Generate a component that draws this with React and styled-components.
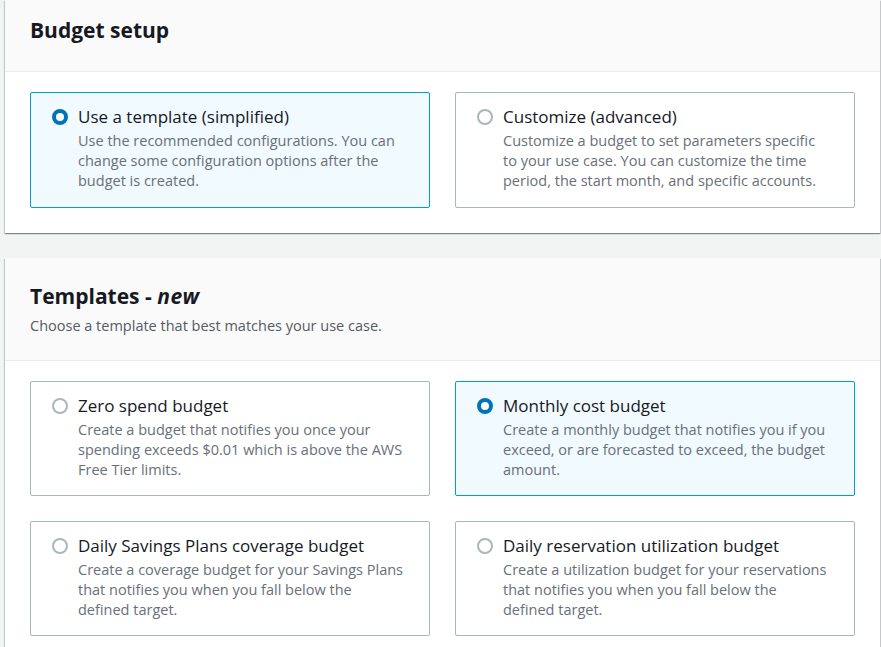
import React, { useState } from 'react';
import styled, { createGlobalStyle } from 'styled-components';

const GlobalStyle = createGlobalStyle`
  html, body {
    margin: 0;
    padding: 0;
    background: #f2f3f3;
  }
  body {
    font-family: 'Open Sans', 'Noto Sans', Arial, sans-serif;
    color: #16191f;
    -webkit-font-smoothing: antialiased;
  }
`;

const Page = styled.div`
  display: flex;
  flex-direction: column;
  gap: 25px;
  padding: 0 1px 0 5px;
  width: 875px;
`;

const Panel = styled.section`
  background: #ffffff;
  box-shadow: 0 1px 1px 0 rgba(0, 28, 36, 0.3), 1px 1px 1px 0 rgba(0, 28, 36, 0.15),
    -1px 1px 1px 0 rgba(0, 28, 36, 0.15);
`;

const PanelHeader = styled.header`
  background: #fafafa;
  border-bottom: 1px solid #eaeded;
  padding: ${(p) => p.$pad};
`;

const Title = styled.h2`
  margin: 0;
  font-size: 21px;
  line-height: 22px;
  font-weight: 700;
  color: #16191f;

  em {
    font-style: italic;
    letter-spacing: 0.5px;
  }
`;

const Subtitle = styled.p`
  margin: 9px 0 0;
  font-size: 14.5px;
  line-height: 20px;
  color: #545b64;
`;

const PanelBody = styled.div`
  display: grid;
  grid-template-columns: 400px 400px;
  column-gap: 25px;
  row-gap: 25px;
  padding: 20px 24px ${(p) => p.$bottom} 25px;
`;

const Tile = styled.label`
  display: flex;
  align-items: flex-start;
  gap: 10px;
  box-sizing: border-box;
  min-height: ${(p) => p.$height};
  padding: 13px 23px 14px 21px;
  border: 1px solid ${(p) => (p.$checked ? '#00a1c9' : '#aab7b8')};
  border-radius: 2px;
  background: ${(p) => (p.$checked ? '#f1faff' : '#ffffff')};
  cursor: pointer;
`;

const Radio = styled.span`
  flex: none;
  box-sizing: border-box;
  width: 16px;
  height: 16px;
  margin-top: 3px;
  border-radius: 50%;
  border: ${(p) => (p.$checked ? '4.5px solid #0073bb' : '2px solid #aab7b8')};
  background: #ffffff;
`;

const TileText = styled.div`
  display: flex;
  flex-direction: column;
  gap: 3px;
`;

const TileTitle = styled.span`
  font-size: 17px;
  line-height: 22px;
  color: #16191f;
`;

const TileDesc = styled.span`
  font-size: 14.5px;
  line-height: 20px;
  color: #687078;
`;

function Option({ checked, title, desc, height, onSelect }) {
  return (
    <Tile $checked={checked} $height={height} onClick={onSelect}>
      <Radio $checked={checked} />
      <TileText>
        <TileTitle>{title}</TileTitle>
        <TileDesc>{desc}</TileDesc>
      </TileText>
    </Tile>
  );
}

const setupOptions = [
  {
    id: 'template',
    title: 'Use a template (simplified)',
    desc: 'Use the recommended configurations. You can change some configuration options after the budget is created.',
  },
  {
    id: 'custom',
    title: 'Customize (advanced)',
    desc: 'Customize a budget to set parameters specific to your use case. You can customize the time period, the start month, and specific accounts.',
  },
];

const templates = [
  {
    id: 'zero',
    title: 'Zero spend budget',
    desc: 'Create a budget that notifies you once your spending exceeds $0.01 which is above the AWS Free Tier limits.',
  },
  {
    id: 'monthly',
    title: 'Monthly cost budget',
    desc: 'Create a monthly budget that notifies you if you exceed, or are forecasted to exceed, the budget amount.',
  },
  {
    id: 'sp',
    title: 'Daily Savings Plans coverage budget',
    desc: 'Create a coverage budget for your Savings Plans that notifies you when you fall below the defined target.',
  },
  {
    id: 'ri',
    title: 'Daily reservation utilization budget',
    desc: 'Create a utilization budget for your reservations that notifies you when you fall below the defined target.',
  },
];

export default function App() {
  const [setup, setSetup] = useState('template');
  const [template, setTemplate] = useState('monthly');

  return (
    <>
      <GlobalStyle />
      <Page>
        <Panel>
          <PanelHeader $pad="19px 25px 30px">
            <Title>Budget setup</Title>
          </PanelHeader>
          <PanelBody $bottom="25px">
            {setupOptions.map((o) => (
              <Option
                key={o.id}
                checked={setup === o.id}
                title={o.title}
                desc={o.desc}
                height="116px"
                onSelect={() => setSetup(o.id)}
              />
            ))}
          </PanelBody>
        </Panel>
        <Panel>
          <PanelHeader $pad="27px 25px 24px">
            <Title>
              Templates - <em>new</em>
            </Title>
            <Subtitle>Choose a template that best matches your use case.</Subtitle>
          </PanelHeader>
          <PanelBody $bottom="25px">
            {templates.map((t) => (
              <Option
                key={t.id}
                checked={template === t.id}
                title={t.title}
                desc={t.desc}
                height="115px"
                onSelect={() => setTemplate(t.id)}
              />
            ))}
          </PanelBody>
        </Panel>
      </Page>
    </>
  );
}
